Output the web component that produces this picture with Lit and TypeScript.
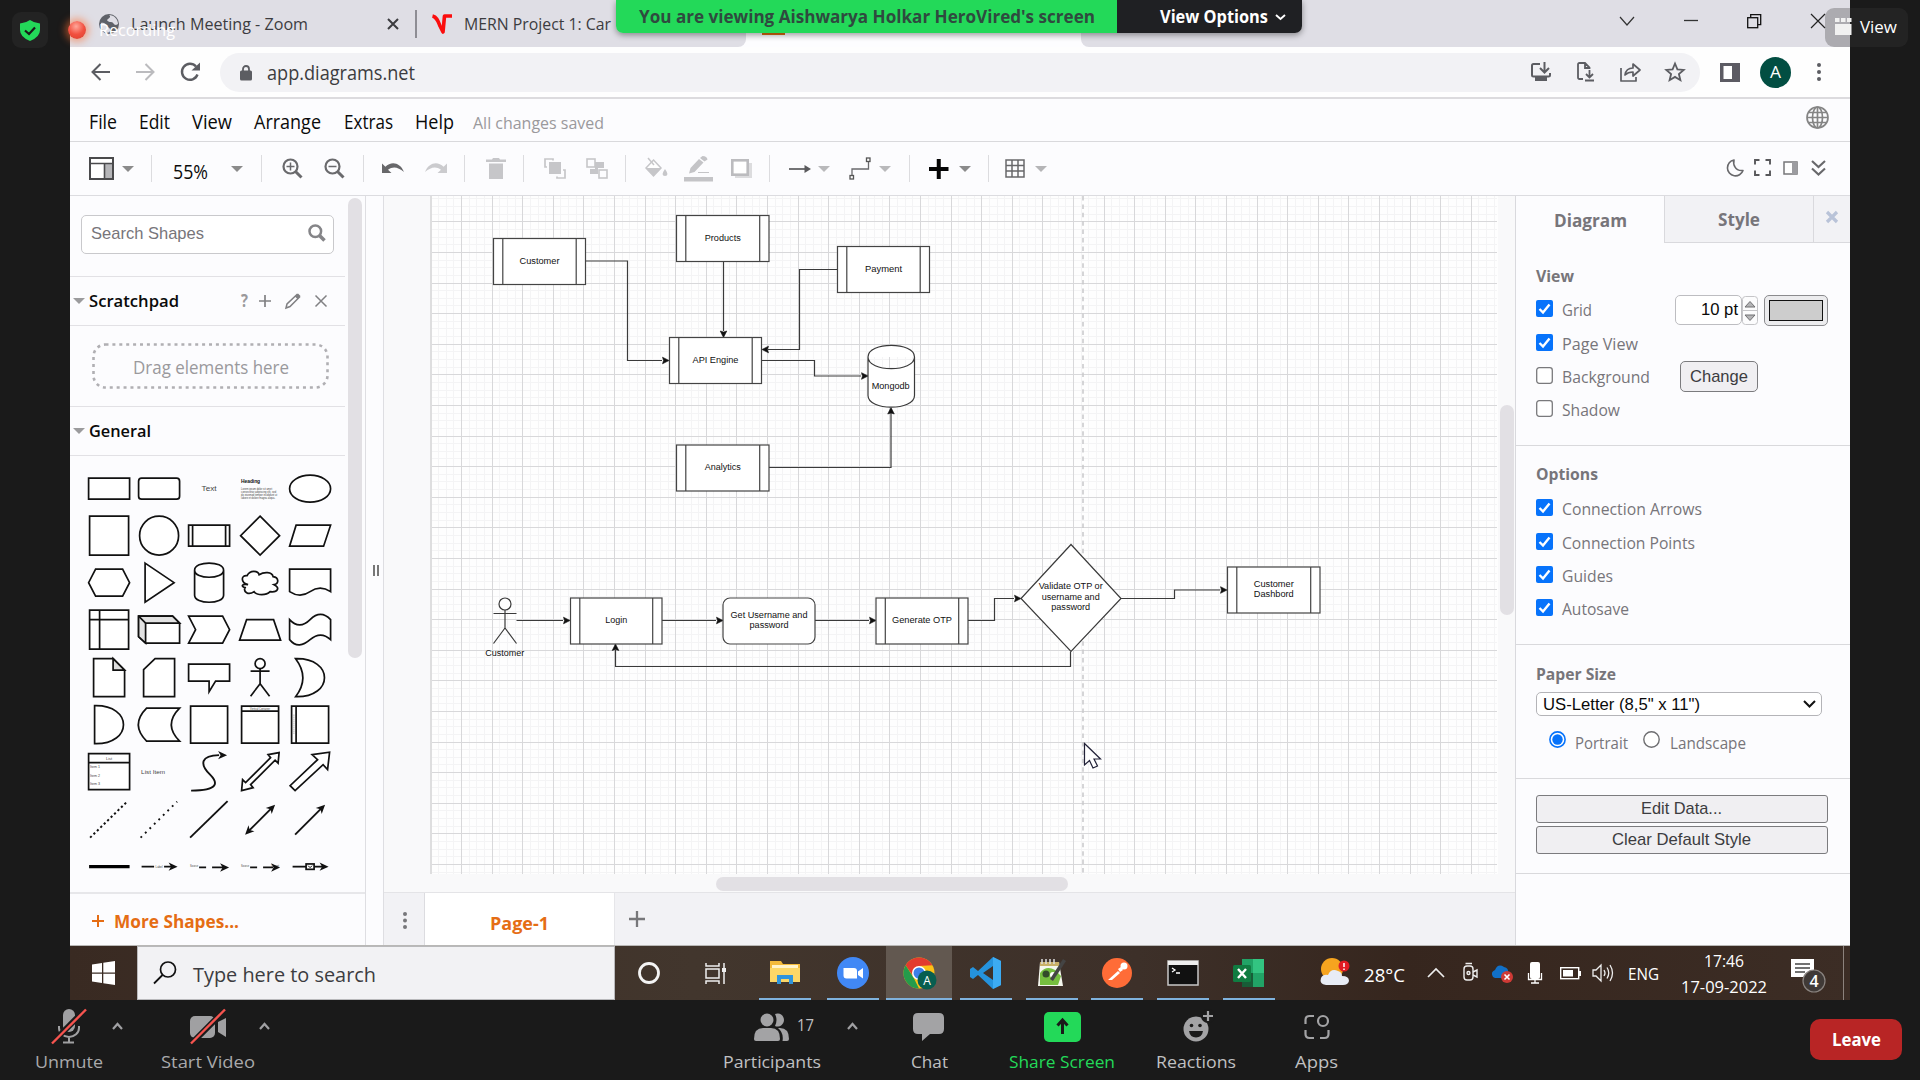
import { LitElement, html, svg, css } from "lit";
import { customElement } from "lit/decorators.js";

/* Text fitted to a fixed run length, so labels keep their column widths. */
const label = (text: string, width: number, cls = "", base = 18) => html`<svg class="label ${cls}" width=${width} height="24"><text x="0" y=${base} textLength=${width} lengthAdjust="spacingAndGlyphs">${text}</text></svg>`;

const icon = (w: number, h: number, body: unknown, cls = "") =>
  html`<svg class="icon ${cls}" width=${w} height=${h} viewBox="0 0 ${w} ${h}">${body}</svg>`;

const caret = (color = "#8b8b8b") => icon(12, 8, svg`<path d="M0 1H12L6 7Z" fill=${color}/>`);
const sep = () => html`<i class="sep"></i>`;

const shared = css`
  * { box-sizing: border-box; }
  .label { display: block; overflow: visible; flex: none; font-family: "Open Sans", "Noto Sans", sans-serif; font-size: 17px; fill: #3c3c40; }
  .icon { display: block; overflow: visible; flex: none; }
  .s16 { font-size: 16.5px; }
  .s18 { font-size: 18px; }
  .s19 { font-size: 19.4px; }
  .arial { font-family: "Liberation Sans", Arial, sans-serif; }
  .bold { font-weight: 700; }
  .mid { font-weight: 600; }
  .black { fill: #0a0a0a; }
  .gray { fill: #77757a; }
  .light { fill: #9a999c; }
  .white { fill: #fff; }
  .orange { fill: #e56d14; }
`;

@customElement("browser-chrome")
class BrowserChrome extends LitElement {
  static styles = [shared, css`
    :host { display: block; height: 99px; }
    .strip { height: 47px; background: #fdfdff; display: grid; grid-template-columns: 676px 335px 1fr; }
    .left { background: #dfdee5; border-radius: 0 0 8px 0; display: grid; align-items: center; padding-left: 29px; grid-template-columns: 32px 256px 28px 16px 33px 1fr; }
    .right { background: #dfdee5; border-radius: 0 0 0 8px; display: grid; align-items: center; grid-template-columns: 539px 64px 63px 64px 1fr; }
    .divider { width: 2px; height: 28px; background: #8e8d94; }
    .active { display: flex; flex-direction: column; padding-left: 16px; }
    .fav { width: 23px; height: 35px; background: #dd6b10; }
    .bar { height: 52px; background: #fefefe; border-bottom: 2px solid #dcdbde; display: grid; align-items: center;
      grid-template-columns: 21px 45px 44px 40px 1480px 20px 40px 43px 1fr; }
    .field { height: 39px; border-radius: 20px; background: #f2f2f5; display: grid; align-items: center; padding-left: 20px;
      grid-template-columns: 27px 1264px 46px 43px 45px 1fr; }
    .avatar { width: 31px; height: 31px; border-radius: 50%; background: #024e42; display: grid; place-items: center; }
  `];
  render() {
    return html`
      <div class="strip">
        <div class="left">
          ${icon(20, 20, svg`<circle cx="10" cy="10" r="10" fill="#5f6269"/><path d="M2 9c3-1 5 1 6 3s3 1 3 4-2 2-3 3C4 18 1 14 2 9zM10 1c2 1 1 3-1 4s0 3 3 3 2 3 5 3l2-1c0-5-4-9-9-9z" fill="#dfdee5"/>`)}
          ${label("Launch Meeting - Zoom", 177, "s16")}
          ${icon(12, 12, svg`<path d="M1 1L11 11M11 1L1 11" stroke="#3c3c40" stroke-width="2"/>`)}
          <i class="divider"></i>
          ${icon(22, 20, svg`<path d="M1.500 2C6 3 7 7 9 12L12 18L13.500 2H21" fill="none" stroke="#fb0d0d" stroke-width="3.600" stroke-linejoin="round"/>`)}
          ${label("MERN Project 1: Car", 147, "s16")}
        </div>
        <div class="active"><i class="fav"></i></div>
        <div class="right">
          <span></span>
          ${icon(14, 10, svg`<path d="M0 0L7 8L14 0" transform="translate(0 -2)" fill="none" stroke="#333" stroke-width="1.200"/>`)}
          ${icon(14, 14, svg`<path d="M0 3.500H14" stroke="#333" stroke-width="1.300"/>`)}
          ${icon(14, 14, svg`<g transform="translate(0 -3)" fill="none" stroke="#111" stroke-width="1.300"><rect x=".7" y="3.700" width="10" height="10"/><path d="M3.700 3.700V.7H13.700V10.700H10.700"/></g>`)}
          ${icon(14, 14, svg`<path d="M0 -3L14 11M14 -3L0 11" stroke="#222" stroke-width="1.200"/>`)}
        </div>
      </div>
      <div class="bar">
        <span></span>
        ${icon(20, 20, svg`<path d="M19 10H2M9.500 2L1.500 10L9.500 18" fill="none" stroke="#5c5d62" stroke-width="2"/>`)}
        ${icon(20, 20, svg`<path d="M0 10H17M9.500 2L17.500 10L9.500 18" fill="none" stroke="#bbbbbe" stroke-width="2"/>`)}
        ${icon(20, 20, svg`<path d="M17.500 12.500A8 8 0 1 1 16 4.500" fill="none" stroke="#5c5d62" stroke-width="2.400"/><path d="M20 .5V8.500H11.500Z" fill="#5c5d62"/>`)}
        <div class="field">
          ${icon(12, 16, svg`<rect y="6.500" width="12" height="10" rx="1.500" fill="#5c5d62"/><path d="M3 7V5a3 3 0 0 1 6 0V7" fill="none" stroke="#5c5d62" stroke-width="1.800"/>`)}
          ${label("app.diagrams.net", 148, "s19", 20)}
          ${icon(20, 20, svg`<g fill="none" stroke="#5c5d62" stroke-width="2"><path d="M9 2H2.500Q1 2 1 3.500V13Q1 14.500 2.500 14.500H17.500Q19 14.500 19 13V11M13.500 0V9.500M9 6L13.500 10.500L18 6"/></g><path d="M4 15H16V19H4Z" fill="#5c5d62"/>`)}
          ${icon(18, 20, svg`<path d="M6 17H2.500Q1 17 1 15.500V2.500Q1 1 2.500 1H8L12.500 5.500V7M8 1V6H12.500" fill="none" stroke="#5c5d62" stroke-width="1.800"/><path d="M12.500 8V15M9 12L12.500 15.500L16 12M8 18.500H17" fill="none" stroke="#5c5d62" stroke-width="1.800"/>`)}
          ${icon(21, 20, svg`<path d="M1 6V19H16V15M5 13Q6 6 13 6V2L20 8L13 14V10Q8 10 5 13Z" fill="none" stroke="#5c5d62" stroke-width="1.700" stroke-linejoin="round"/>`)}
          ${icon(20, 20, svg`<path d="M10 1.500L12.400 7.300L18.700 7.900L13.900 12L15.400 18.200L10 14.900L4.600 18.200L6.100 12L1.300 7.900L7.600 7.300Z" fill="none" stroke="#5c5d62" stroke-width="1.800"/>`)}
        </div>
        <span></span>
        ${icon(20, 19, svg`<rect x="0" y="0" width="20" height="19" fill="#5c5b63"/><rect x="3.500" y="3" width="8.500" height="13" fill="#fff"/>`)}
        <div class="avatar">${label("A", 11, "s16 white")}</div>
        ${icon(6, 20, svg`<g fill="#5c5d62" transform="translate(13 0)"><circle cx="3" cy="3" r="2"/><circle cx="3" cy="10" r="2"/><circle cx="3" cy="17" r="2"/></g>`)}
      </div>`;
  }
}

@customElement("editor-bars")
class EditorBars extends LitElement {
  static styles = [shared, css`
    :host { display: block; background: #fcfcfe; height: 97px; }
    .menu { height: 43px; border-bottom: 1px solid #d9d9dc; display: grid; align-items: center; padding: 1px 0 0 18.500px;
      grid-template-columns: 50px 53px 62px 90px 71px 58.500px 1333px 1fr; }
    .tools { height: 54px; border-bottom: 1px solid #dcdce0; display: grid; align-items: center; padding-left: 19px;
      grid-template-columns: 33px 29px 22px 58px 30px 21px 42px 39px 19px 43px 39px 22px 37px 21px 42px 39px 20px 39px 47px 38px 20px 29px 31px 30px 30px 20px 30px 29px 17px 30px 692px 27px 29px 28px 1fr; }
    .sep { width: 1px; height: 27px; background: #dcdcdf; }
    .up { padding-bottom: 2px; }
  `];
  render() {
    const lens = (sign: string) => icon(21, 21, svg`<circle cx="8.500" cy="8.500" r="7" fill="none" stroke="#6a6a6d" stroke-width="2.200"/><path d="M13.500 13.500L19.500 19.500" stroke="#6a6a6d" stroke-width="3"/><path d=${sign} stroke="#6a6a6d" stroke-width="1.500"/>`);
    return html`
      <div class="menu">
        ${label("File", 28, "s19 black", 20)}${label("Edit", 31, "s19 black", 20)}${label("View", 40, "s19 black", 20)}
        ${label("Arrange", 67, "s19 black", 20)}${label("Extras", 49, "s19 black", 20)}${label("Help", 39, "s19 black", 20)}
        ${label("All changes saved", 131, "s16 light", 20)}
        ${icon(23, 23, svg`<g fill="none" stroke="#858585" stroke-width="1.700" transform="translate(0 -3)"><circle cx="11.500" cy="11.500" r="10.500"/><ellipse cx="11.500" cy="11.500" rx="5" ry="10.500"/><path d="M11.500 1V22M1 11.500H22M2.500 6.500H20.500M2.500 16.500H20.500"/></g>`)}
      </div>
      <div class="tools">
        ${icon(25, 23, svg`<rect x="1" y="1" width="23" height="21" fill="#fff" stroke="#4a4a4c" stroke-width="2"/><path d="M15 6H23V21H15Z" fill="#b5b5b8"/><path d="M1 6.500H24M15.500 6V22" stroke="#4a4a4c" stroke-width="1.600"/>`)}
        ${caret()}${sep()}${label("55%", 35, "s19 black", 22)}${caret()}${sep()}
        ${lens("M4.500 8.500H12.500M8.500 4.500V12.500")}${lens("M4.500 8.500H12.500")}${sep()}
        ${icon(22, 12, svg`<path d="M0 .5V10H9.500L6 6.800C11 3 16 4 22 9C18 -1 9 -2 3.400 3.800Z" fill="#67676a"/>`)}
        ${icon(22, 12, svg`<path d="M22 .5V10H12.500L16 6.800C11 3 6 4 0 9C4 -1 13 -2 18.600 3.800Z" fill="#cbcbce"/>`)}
        ${sep()}
        ${icon(20, 21, svg`<path d="M0 1.500H6L7 0H13L14 1.500H20V4H0ZM3 5.500H17V21H3Z" fill="#c6c6c9"/>`)}
        ${sep()}
        ${icon(22, 21, svg`<path d="M5 4H17V16H5Z" fill="#c6c6c9"/><path d="M3 9H1V1H9V2.500M13 18.500V20H21V12H19" fill="none" stroke="#c6c6c9" stroke-width="1.700"/>`)}
        ${icon(22, 21, svg`<path d="M9 4H18V10H12V16H4V11H9Z" fill="#c6c6c9"/><rect x="1" y="1" width="8" height="8" fill="none" stroke="#c6c6c9" stroke-width="1.600"/><rect x="13" y="12" width="8" height="8" fill="none" stroke="#c6c6c9" stroke-width="1.600"/>`)}
        ${sep()}
        ${icon(23, 20, svg`<g transform="translate(0 -2)"><path d="M8.500 3L16 11L8.500 19L1 11Z" fill="#fff" stroke="#c6c6c9" stroke-width="1.500"/><path d="M1 11H16L8.500 19Z" fill="#c6c6c9"/><path d="M3 1L9 8" stroke="#c6c6c9" stroke-width="1.500"/><path d="M20 12Q25 19 20 19T20 12Z" fill="#c6c6c9"/></g>`)}
        ${icon(29, 26, svg`<g fill="#c4c4c7"><path d="M0 21H29V25.500H0Z"/><path d="M5 17.500L6.500 12L15 3L19.500 6.500L10.500 16ZM16 2L18.500 0Q23 0 23.500 3.500L20.500 5.500Z"/><path d="M14 16H25V17H14Z"/></g>`)}
        ${icon(21, 19, svg`<path d="M4 4H21V19H4Z" fill="#dcdcde"/><rect x="1.300" y="1.300" width="15.400" height="14.400" fill="#fff" stroke="#bcbcbf" stroke-width="2.600"/>`)}
        ${sep()}
        ${icon(22, 10, svg`<path d="M0 5H18" stroke="#5a5a5d" stroke-width="1.700"/><path d="M15.500 1L22 5L15.500 9Z" fill="#5a5a5d"/>`)}
        ${caret("#b9b9bb")}
        ${icon(22, 23, svg`<path d="M3 18V12H19.500V5" fill="none" stroke="#6a6a6d" stroke-width="1.300"/><rect x="1" y="18.500" width="3.500" height="3.500" fill="#fff" stroke="#555" stroke-width="1.300"/><rect x="17.500" y="1" width="3.500" height="3.500" fill="#fff" stroke="#555" stroke-width="1.300"/>`)}
        ${caret("#b9b9bb")}${sep()}
        ${icon(20, 20, svg`<path d="M0 10H19.500M9.750 0V20" stroke="#050505" stroke-width="4"/>`)}
        ${caret()}${sep()}
        ${icon(20, 19, svg`<path d="M1 1H19V18H1ZM1 6.500H19M1 12H19M7 1V18M13 1V18" fill="none" stroke="#68686b" stroke-width="1.500"/>`)}
        ${caret("#b5b5b7")}
        <div class="up">${icon(17, 17, svg`<path d="M7 1A8 8 0 1 0 16 11.500Q10 12 8 8Q6 5 7 1Z" fill="none" stroke="#68686b" stroke-width="1.600" stroke-linejoin="round"/>`)}</div>
        <div class="up">${icon(17, 17, svg`<path d="M1 5.500V1H5.500M11.500 1H16V5.500M16 11.500V16H11.500M5.500 16H1V11.500" fill="none" stroke="#58585b" stroke-width="1.900"/>`)}</div>
        <div class="up">${icon(15, 14, svg`<rect x="1" y="1" width="13" height="12" fill="#fff" stroke="#77777a" stroke-width="1.500"/><path d="M9 1H14V13H9Z" fill="#9c9ca0"/>`)}</div>
        <div class="up">${icon(15, 16, svg`<path d="M1 1L7.500 7L14 1M1 8.500L7.500 14.500L14 8.500" fill="none" stroke="#68686b" stroke-width="2.100"/>`)}</div>
      </div>`;
  }
}

/* Palette thumbnails, each drawn around the centre of its cell. */
const poly = (d: string) => svg`<path d=${d} fill="#fff" stroke="#111" stroke-width="1.700"/>`;
const tiny = (x: number, y: number, size: number, text: string, w = 0) =>
  svg`<text x=${x} y=${y} font-size=${size} fill="#444" font-family="Liberation Sans, sans-serif" textLength=${w} lengthAdjust="spacingAndGlyphs">${text}</text>`;
const head = (x: number, y: number, a: number) => svg`<path d="M0 0L-9 -4.200L-6.500 0L-9 4.200Z" transform="translate(${x} ${y}) rotate(${a})" fill="#111"/>`;
const shapes = [
  poly("M-20.500 -10.500H20.500V10.500H-20.500Z"),
  svg`<rect x="-20.500" y="-10.500" width="41" height="21" rx="3" fill="#fff" stroke="#111" stroke-width="1.700"/>`,
  tiny(-7.5, 2, 8, "Text", 15),
  svg`<text x="-19" y="-6" font-size="5" font-weight="700" fill="#111" font-family="Liberation Sans, sans-serif" textLength="19">Heading</text>${tiny(-19, 1, 3, "Lorem ipsum dolor sit amet", 31)}${tiny(-19, 4, 3, "consectetur adipiscing elit, sed", 35)}${tiny(-19, 7, 3, "do eiusmod tempor incididunt ut", 36)}${tiny(-19, 10, 3, "labore et dolore magna aliqua.", 34)}`,
  svg`<ellipse rx="20.500" ry="13.500" fill="#fff" stroke="#111" stroke-width="1.700"/>`,
  poly("M-19.500 -19.500H19.500V19.500H-19.500Z"),
  svg`<circle r="19.500" fill="#fff" stroke="#111" stroke-width="1.700"/>`,
  poly("M-20.500 -10.500H20.500V10.500H-20.500ZM-16.500 -10.500V10.500M16.500 -10.500V10.500"),
  poly("M0 -19.500L19.500 0L0 19.500L-19.500 0Z"),
  poly("M-14 -10.500H20.500L13.500 10.500H-20.500Z"),
  poly("M-13.500 -13.500H13.500L20.500 0L13.500 13.500H-13.500L-20.500 0Z"),
  poly("M-14 -19.500L15 0L-14 19.500Z"),
  poly("M-14.500 -12.500C-14.500 -22 14.500 -22 14.500 -12.500V12.500C14.500 22 -14.500 22 -14.500 12.500ZM-14.500 -12.500C-14.500 -3 14.500 -3 14.500 -12.500"),
  poly("M-13 -7C-10 -13 -2 -12 -1 -8C4 -11 12 -11 13 -6C19 -5 19 1 14 2C20 5 18 10 10 9C6 13 -3 13 -6 9C-12 13 -17 9 -15 5C-19 4 -19 1 -12 2C-20 0 -19 -8 -13 -7Z"),
  poly("M-20.500 -13.500H20.500V9Q10 2 0 9T-20.500 9Z"),
  poly("M-19.500 -19.500H19.500V19.500H-19.500ZM-9.500 -19.500V19.500M-19.500 -10H19.500"),
  svg`${poly("M-20.500 -13.500H13.500L20.500 -6.500V13.500H-13.500L-20.500 7Z")}<path d="M-20.500 -13.500H13.500L20.500 -6.500H-13.500V13.500L-20.500 7Z" fill="#e2e2e2" stroke="#111" stroke-width="1.700"/><path d="M-20.500 -13.500L-13.500 -6.500" stroke="#111" stroke-width="1.700"/>`,
  poly("M-20.500 -13.500H13.500L20.500 0L13.500 13.500H-20.500L-13.500 0Z"),
  poly("M-13.500 -10H13.500L20.500 10.500H-20.500Z"),
  poly("M-20.500 -10C-14 -3 -7 -3 0 -10S14 -17 20.500 -10V10C14 4 7 4 0 10S-14 18 -20.500 10Z"),
  svg`${poly("M-15.500 -19H4L15.500 -7.500V19H-15.500Z")}<path d="M4 -19V-7.500H15.500Z" fill="#ddd" stroke="#111" stroke-width="1.700"/>`,
  poly("M-4 -19H15.500V19H-15.500V-8Z"),
  poly("M-20.500 -13.500H20.500V3.500H6.500L0 14V3.500H-20.500Z"),
  svg`<g fill="#fff" stroke="#111" stroke-width="1.700"><circle cy="-14" r="5"/><path d="M0 -9V6M-9.500 -6.500H9.500M0 6L-9.500 18.500M0 6L9.500 18.500"/></g>`,
  poly("M-14.500 -19C24 -20 24 20 -14.500 19Q0 0 -14.500 -19Z"),
  poly("M-14.500 -19C24 -20 24 20 -14.500 19Z"),
  poly("M-12.500 -16.500H20.500Q4 0 20.500 16.500H-12.500Q-29 0 -12.500 -16.500Z"),
  poly("M-18.500 -18.500H18.500V18.500H-18.500Z"),
  svg`${poly("M-18.500 -18.500H18.500V18.500H-18.500ZM-18.500 -13.500H18.500")}${tiny(-10, -15, 3, "Vertical Container", 20)}`,
  svg`${poly("M-18.500 -18.500H18.500V18.500H-18.500ZM-14 -18.500V18.500")}<path d="M-16.200 -10V10" stroke="#999" stroke-dasharray="1 1"/>`,
  svg`${poly("M-20.500 -18H20.500V18H-20.500ZM-20.500 -9H20.500")}${tiny(-3, -12, 4, "List", 6)}${tiny(-19, -4, 4, "Item 1", 10)}${tiny(-19, 5.5, 4, "Item 2", 10)}${tiny(-19, 13.5, 4, "Item 3", 10)}`,
  tiny(-18, 2, 6.2, "List Item", 24),
  svg`<path d="M-18 19C10 19 9 11 1 3C-10 -8 -8 -16 10 -16.500" fill="none" stroke="#111" stroke-width="1.900"/>${head(18, -16.5, 0)}`,
  poly("M19 -19L18 -8.500L15 -11.500L-9.500 13L-7 16L-18.500 19L-17.500 8L-14.500 11L10.500 -14L8 -17Z"),
  poly("M19.500 -19.500L17.500 -2L13 -7L-15 19L-20 14L7.500 -12L2 -17Z"),
  svg`<path d="M-19 18L18 -18" stroke="#111" stroke-width="2" stroke-dasharray="2.200 2.600"/>`,
  svg`<path d="M-18.500 18L18 -18" stroke="#111" stroke-width="1.900" stroke-dasharray="1.900 4.400"/>`,
  svg`<path d="M-19 18L18.500 -18.500" stroke="#111" stroke-width="1.900"/>`,
  svg`<path d="M-12 12L12 -12" stroke="#111" stroke-width="1.900"/>${head(15, -15, -45)}${head(-15, 15, 135)}`,
  svg`<path d="M-15 15L12 -12" stroke="#111" stroke-width="1.900"/>${head(15, -15, -45)}`,
  svg`<path d="M-20 0H20.500" stroke="#000" stroke-width="3.200"/>`,
  svg`<path d="M-17.500 0H-5M5 0H13" stroke="#111" stroke-width="1.800"/>${tiny(-3.5, 1, 3, "Label", 7)}${head(18.5, 0, 0)}`,
  svg`<path d="M-10 .8H-3M3 .8H15" stroke="#111" stroke-width="1.800"/>${tiny(-19, 0.8, 3, "Source", 8)}${head(20, 0.8, 0)}`,
  svg`<path d="M-10 .8H-3M3 .8H13" stroke="#111" stroke-width="1.800"/>${tiny(-19, 0.8, 3, "Source", 8)}${tiny(11, 0.3, 3, "Target", 8)}${head(20, 0.8, 0)}`,
  svg`<path d="M-17.500 0H13" stroke="#111" stroke-width="1.800"/><rect x="-4" y="-2.700" width="8" height="5.400" fill="#fff" stroke="#111" stroke-width="1.700"/><path d="M-2 -1L0 1L2 -1" stroke="#111" fill="none"/>${head(18.5, 0, 0)}`,
];

@customElement("shape-sidebar")
class ShapeSidebar extends LitElement {
  static styles = [shared, css`
    :host { display: flex; width: 314px; height: 749px; background: #fcfcfe; border-right: 1px solid #dedee2; }
    .panel { width: 296px; border-right: 1px solid #dedee2; display: flex; flex-direction: column; }
    .body { display: flex; height: 696px; overflow: hidden; }
    .content { width: 275px; flex: none; }
    .track { padding: 2px 3px; }
    .thumb { width: 14px; height: 460px; border-radius: 7px; background: #e2e0e4; }
    .search { height: 81px; border-bottom: 1px solid #e2e1e5; padding: 19px 11px 0; }
    .box { width: 253px; height: 39px; border: 1px solid #c9c9cc; border-radius: 5px; background: #fff; display: flex; align-items: center; justify-content: space-between; padding: 0 7px 3px 9px; }
    .head { height: 49px; border-bottom: 1px solid #e2e1e5; display: grid; align-items: center; padding-left: 3px; grid-template-columns: 16px 152px 18px 26px 30px 1fr; }
    .drop { height: 81px; border-bottom: 1px solid #e2e1e5; padding: 17px 0 0 22px; }
    .grid { display: grid; grid-template-columns: repeat(5, 50.2px); grid-auto-rows: 47.3px; padding: 8.500px 0 0 14px; }
    .more { flex: 1; border-top: 2px solid #e7e7ea; display: flex; align-items: center; gap: 10px; padding: 3px 0 0 22px; }
    .split { display: flex; gap: 2.500px; align-items: center; padding-left: 7px; height: 749px; }
    .grip { width: 1.500px; height: 11px; background: #777; }
  `];
  render() {
    return html`
      <div class="panel">
        <div class="body">
          <div class="content">
            <div class="search"><div class="box">${label("Search Shapes", 113, "arial gray")}
              ${icon(18, 18, svg`<circle cx="7.300" cy="7.300" r="5.800" fill="none" stroke="#858588" stroke-width="2.500"/><path d="M11.500 11.500L16.500 16.500" stroke="#858588" stroke-width="3.600"/>`)}</div></div>
            <div class="head">${caret("#9b9b9d")}${label("Scratchpad", 90, "mid black")}
              ${label("?", 7, "bold light")}
              ${icon(12, 12, svg`<path d="M0 6H12M6 0V12" stroke="#808083" stroke-width="1.700"/>`)}
              ${icon(16, 16, svg`<path d="M1 15L2 11L12 1.500L14.500 4L5 13.500ZM10.500 3L13 5.500" fill="none" stroke="#808083" stroke-width="1.500"/><path d="M10.500 3L13 .5L15.500 3L13 5.500Z" fill="#808083"/>`)}
              ${icon(12, 12, svg`<path d="M.5 .5L11.500 11.500M11.500 .5L.5 11.500" stroke="#808083" stroke-width="1.500"/>`)}
            </div>
            <div class="drop">
              <svg class="icon" width="237" height="46"><rect x="1.500" y="1.500" width="234" height="43" rx="12" fill="none" stroke="#b0afb3" stroke-width="2.600" stroke-dasharray="3 3.900"/>
              <text class="label light s18" x="41" y="31" textLength="156" lengthAdjust="spacingAndGlyphs">Drag elements here</text></svg>
            </div>
            <div class="head">${caret("#9b9b9d")}${label("General", 62, "mid black")}</div>
            <div class="grid">${shapes.map((s) => html`<svg class="icon" width="50.2" height="47.3" viewBox="-25.100 -23.650 50.200 47.300">${s}</svg>`)}</div>
          </div>
          <div class="track"><div class="thumb"></div></div>
        </div>
        <div class="more">${icon(12, 12, svg`<path d="M0 6H12M6 0V12" stroke="#e56d14" stroke-width="2"/>`)}${label("More Shapes...", 125, "s18 bold orange", 19)}</div>
      </div>
      <div class="split"><i class="grip"></i><i class="grip"></i></div>`;
  }
}

/* Diagram model */
type Box = { x: number; y: number; w: number; lines: string[]; widths: number[]; kind?: string };
const H = 46;
const boxes: Box[] = [
  { x: 493.5, y: 238.5, w: 92, lines: ["Customer"], widths: [40] },
  { x: 676.5, y: 215.5, w: 92.5, lines: ["Products"], widths: [36] },
  { x: 837.5, y: 246.5, w: 92, lines: ["Payment"], widths: [37] },
  { x: 669.5, y: 337.5, w: 92, lines: ["API Engine"], widths: [46] },
  { x: 676.5, y: 445, w: 92.5, lines: ["Analytics"], widths: [36] },
  { x: 570.5, y: 598, w: 91.5, lines: ["Login"], widths: [22] },
  { x: 723, y: 598, w: 92, lines: ["Get Username and", "password"], widths: [77, 39], kind: "round" },
  { x: 876, y: 598, w: 92, lines: ["Generate OTP"], widths: [60] },
  { x: 1227.5, y: 567, w: 92.5, lines: ["Customer", "Dashbord"], widths: [40, 40] },
];
const edges = [
  { d: "M585.500 261H627.500V360.500H662", x: 669, y: 360.5, a: 0 },
  { d: "M723.500 261.500V331", x: 723.5, y: 337.5, a: 90 },
  { d: "M837.500 269.500H799.500V349.500H768", x: 762, y: 349.5, a: 180 },
  { d: "M761.500 360.500H814.500V376H861", x: 868, y: 376, a: 0 },
  { d: "M769 467.500H891V413", x: 891, y: 407.5, a: 270 },
  { d: "M516.500 620.500H563", x: 570, y: 620.5, a: 0 },
  { d: "M662 620.500H716", x: 723, y: 620.5, a: 0 },
  { d: "M815 620.500H869", x: 876, y: 620.5, a: 0 },
  { d: "M968 620.500H994.500V598.500H1014", x: 1021, y: 598.5, a: 0 },
  { d: "M1070.500 651.500V666.500H615.500V650", x: 615.5, y: 644, a: 270 },
  { d: "M1121 598.500H1174.500V590H1220", x: 1227, y: 590, a: 0 },
];
const caption = (cx: number, cy: number, lines: string[], widths: number[]) =>
  lines.map((t, i) => svg`<text class="cap" x=${cx - widths[i] / 2} y=${cy + 2.8 + (i - (lines.length - 1) / 2) * 10.5} textLength=${widths[i]} lengthAdjust="spacingAndGlyphs">${t}</text>`);
const series = (start: number, step: number, min: number, max: number) => {
  const out: number[] = [];
  for (let k = -8; k < 160; k++) {
    const v = start + k * step;
    if (v > min && v < max) out.push(Math.round(v) + 0.5);
  }
  return out;
};

@customElement("diagram-canvas")
class DiagramCanvas extends LitElement {
  static styles = [shared, css`
    :host { display: flex; flex-direction: column; width: 1131px; height: 749px; background: #f9f9fa; }
    .cap { font-family: "Liberation Sans", Arial, sans-serif; font-size: 9.200px; fill: #111; }
    .row { display: flex; height: 678px; }
    .canvas { display: block; flex: none; }
    .v { padding: 209px 0 0 1.500px; }
    .vthumb { width: 14px; height: 210px; border-radius: 7px; background: #e2e0e4; }
    .h { height: 18px; padding: 3px 0 0 332px; }
    .hthumb { width: 352px; height: 14px; border-radius: 7px; background: #e2e0e4; }
    .tabs { flex: 1; background: #f2f2f5; border-top: 1px solid #e4e4e7; display: grid; grid-template-columns: 40px 191px 1fr; align-items: stretch; }
    .cell { display: flex; align-items: center; justify-content: center; padding: 2px 0 0 1px; }
    .page { background: #fff; border-left: 1px solid #dcdce0; border-right: 1px solid #e6e6e9; display: flex; align-items: center; justify-content: center; padding-top: 6px; }
    .add { display: flex; align-items: center; padding: 0 0 1px 14px; }
  `];
  render() {
    const vx = series(461, 7.65, 432, 1497), hy = series(221.3, 7.65, 196, 874);
    const mx = series(461, 30.6, 432, 1497), my = series(221.3, 30.6, 196, 874);
    const grid = (xs: number[], ys: number[]) => xs.map((x) => `M${x} 196V874`).join("") + ys.map((y) => `M432 ${y}H1497`).join("");
    return html`
      <div class="row">
      <svg class="canvas" width="1114" height="678" viewBox="384 196 1114 678">
        <rect x="432" y="196" width="1066" height="678" fill="#fefefe"/>
        <path d=${grid(vx, hy)} stroke="#f4f4f5"/>
        <path d=${grid(mx, my)} stroke="#d8d8da"/>
        <path d="M431 196V874" stroke="#dededf" stroke-width="2"/>
        <path d="M1083 196V874" stroke="#c8c8ca" stroke-width="1.500" stroke-dasharray="4.500 3.900"/>
        <g fill="none" stroke="#3a3a3a" stroke-width="1.200">${edges.map((e) => svg`<path d=${e.d}/>`)}</g>
        ${edges.map((e) => svg`<path d="M0 0L-6.500 -3.300L-5.500 0L-6.500 3.300Z" transform="translate(${e.x} ${e.y}) rotate(${e.a})" fill="#111" stroke="#111" stroke-width=".6"/>`)}
        ${boxes.map((b) => svg`
          <rect x=${b.x} y=${b.y} width=${b.w} height=${H} rx=${b.kind ? 7 : 0} fill="#fff" stroke="#444" stroke-width="1.200"/>
          ${b.kind ? "" : svg`<path d="M${b.x + 9.3} ${b.y}v${H}M${b.x + b.w - 9.3} ${b.y}v${H}" stroke="#444" stroke-width="1.200"/>`}
          ${caption(b.x + b.w / 2, b.y + H / 2 - 0.6, b.lines, b.widths)}`)}
        <g fill="#fff" stroke="#3a3a3a" stroke-width="1.200">
          <path d="M868 357C868 341.500 914.500 341.500 914.500 357V395.500C914.500 411 868 411 868 395.500ZM868 357C868 372.500 914.500 372.500 914.500 357"/>
          <path d="M1071 544.500L1121 598.500L1071 651.500L1021 598.500Z"/>
          <circle cx="505" cy="604" r="6"/>
          <path d="M505 610V628M493.500 613.500H516.500M505 628L493.500 643.500M505 628L516.500 643.500"/>
        </g>
        ${caption(890.7, 386.5, ["Mongodb"], [38])}
        ${caption(1070.7, 597, ["Validate OTP or", "username and", "password"], [64, 58, 39])}
        ${caption(504.7, 653, ["Customer"], [39])}
        <path d="M1084.500 743.500V765L1089.500 760.500L1093 768L1097.500 766L1094 759H1100.500Z" fill="#fff" stroke="#222238" stroke-width="1.200"/>
      </svg>
      <div class="v"><div class="vthumb"></div></div>
      </div>
      <div class="h"><div class="hthumb"></div></div>
      <div class="tabs">
        <div class="cell">${icon(4, 18, svg`<g fill="#77777a"><circle cx="2" cy="3" r="2"/><circle cx="2" cy="9.500" r="2"/><circle cx="2" cy="16" r="2"/></g>`)}</div>
        <div class="page">${label("Page-1", 59, "bold orange", 19.5)}</div>
        <div class="add">${icon(16, 16, svg`<path d="M0 8H16M8 0V16" stroke="#77777a" stroke-width="2.300"/>`)}</div>
      </div>`;
  }
}

@customElement("format-panel")
class FormatPanel extends LitElement {
  static styles = [shared, css`
    :host { display: block; width: 335px; height: 749px; background: #fcfcfe; border-left: 1px solid #d9d9dd; }
    .tabs { display: grid; grid-template-columns: 148px 149px 37px; height: 47px; }
    .tab { display: flex; align-items: center; justify-content: center; padding-top: 2px; }
    .off { background: #f2f2f5; border-left: 1px solid #d9d9dd; border-bottom: 1px solid #d9d9dd; }
    .sect { border-bottom: 1px solid #d9d9dc; padding: 0 22px 0 19.500px; }
    .view { height: 203px; padding-top: 21px; }
    .opts { height: 199px; padding-top: 16px; }
    .paper { height: 134px; padding-top: 17px; }
    .acts { height: 95px; padding-top: 16px; display: grid; grid-template-rows: 28px 28px; row-gap: 3px; }
    .line { display: grid; grid-template-columns: 26px 1fr; align-items: center; height: 33.400px; }
    .line.num { grid-template-columns: 26px 113px 67px 22px 1fr; }
    .line.chg { grid-template-columns: 26px 118px 78px; }
    .rows { padding-top: 5.500px; }
    .opts .rows { padding-top: 6.500px; }
    .ck { padding-bottom: 3px; }
    .field { width: 67px; height: 30px; border: 1px solid #bdbdc1; border-radius: 5px; background: #fff; display: flex; justify-content: flex-end; align-items: center; padding: 0 3px 2px 0; }
    .swatch { width: 64px; height: 31px; border: 1px solid #8b8b8e; border-radius: 5px; background: #ececee; padding: 4px; }
    .chip { height: 21px; width: 54px; background: #cdcdcd; border: 1px solid #111; }
    .btn { border: 1px solid #7b7b7e; border-radius: 3px; background: #f0eff2; display: flex; align-items: center; justify-content: center; padding-bottom: 3px; }
    .change { width: 78px; height: 31px; border-radius: 5px; padding-bottom: 2px; }
    .select { width: 286px; height: 24px; border: 1px solid #b4b4b8; border-radius: 5px; background: #fff; display: flex; align-items: center; justify-content: space-between; padding: 0 5px 0 6px; }
    .radios { display: grid; grid-template-columns: 26px 68px 27px 1fr; padding: 15px 0 0 13px; align-items: center; }
    .radios .icon { margin-bottom: 7px; }
    .gapped { height: 30px; }
  `];
  private check(on: boolean) {
    return html`<div class="ck">${icon(17, 17, on
      ? svg`<rect width="17" height="17" rx="2" fill="#0773fb"/><path d="M3.500 9L7 12.500L13.500 4.500" fill="none" stroke="#fff" stroke-width="2.400"/>`
      : svg`<rect x=".7" y=".7" width="15.600" height="15.600" rx="2.500" fill="#fff" stroke="#79797c" stroke-width="1.300"/>`)}</div>`;
  }
  render() {
    const opts: [string, number][] = [["Connection Arrows", 140], ["Connection Points", 133], ["Guides", 51], ["Autosave", 67]];
    return html`
      <div class="tabs">
        <div class="tab">${label("Diagram", 73, "s18 bold gray")}</div>
        <div class="tab off">${label("Style", 42, "s18 bold gray")}</div>
        <div class="tab off">${icon(12, 18, svg`<path d="M1 1L11 11M11 1L1 11" stroke="#b9c3d8" stroke-width="3.200"/>`)}</div>
      </div>
      <div class="sect view">
        ${label("View", 38, "s16 bold gray")}
        <div class="rows">
          <div class="line num">${this.check(true)}${label("Grid", 30, "s16 gray", 17.5)}
            <div class="field">${label("10 pt", 37, "arial black")}</div>
            ${icon(16, 29, svg`<rect x=".5" y=".5" width="15" height="28" rx="3" fill="#fcfcfd" stroke="#c5c5c8"/><path d="M0 14.500H16" stroke="#c5c5c8"/><path d="M3 11L8 5.500L13 11ZM3 19L8 24.500L13 19Z" fill="#b5b5b7" stroke="#707073"/>`)}
            <div class="swatch"><div class="chip"></div></div></div>
          <div class="line">${this.check(true)}${label("Page View", 76, "s16 gray", 17.5)}</div>
          <div class="line chg">${this.check(false)}${label("Background", 88, "s16 gray", 17.5)}<div class="btn change">${label("Change", 58, "arial")}</div></div>
          <div class="line">${this.check(false)}${label("Shadow", 58, "s16 gray", 17.5)}</div>
        </div>
      </div>
      <div class="sect opts">
        ${label("Options", 62, "s16 bold gray")}
        <div class="rows">${opts.map(([t, w]) => html`<div class="line">${this.check(true)}${label(t, w, "s16 gray", 17.5)}</div>`)}</div>
      </div>
      <div class="sect paper">
        <div class="gapped">${label("Paper Size", 80, "s16 bold gray")}</div>
        <div class="select">${label('US-Letter (8,5" x 11")', 157, "arial s16 black")}${icon(13, 8, svg`<path d="M1 1L6.500 6.500L12 1" fill="none" stroke="#111" stroke-width="2"/>`)}</div>
        <div class="radios">
          ${icon(17, 17, svg`<circle cx="8.500" cy="8.500" r="7.600" fill="#fff" stroke="#0773fb" stroke-width="1.600"/><circle cx="8.500" cy="8.500" r="5.200" fill="#0773fb"/>`)}
          ${label("Portrait", 53, "s16 gray")}
          ${icon(17, 17, svg`<circle cx="8.500" cy="8.500" r="7.700" fill="#fff" stroke="#6e6e71" stroke-width="1.400"/>`)}
          ${label("Landscape", 76, "s16 gray")}
        </div>
      </div>
      <div class="sect acts">
        <div class="btn">${label("Edit Data...", 81, "arial")}</div>
        <div class="btn">${label("Clear Default Style", 139, "arial")}</div>
      </div>`;
  }
}

@customElement("task-bar")
class TaskBar extends LitElement {
  static styles = [shared, css`
    :host { display: grid; height: 55px; background: linear-gradient(90deg, #392a22, #42362d 35%, #3d3029 60%, #36261e 75%, #3c2d25); border-top: 1px solid #b9b8b6;
      grid-template-columns: 67px 478px 67px 67px 71px 66px 66px 68px 64px 66px 66px 66px 1fr; }
    .start { display: grid; place-items: center; }
    .search { background: #f2f2f4; border: 1px solid #b9b9bb; display: flex; align-items: center; gap: 16px; padding-left: 15px; }
    .app { display: grid; place-items: center; grid-template-rows: 1fr 2px; padding-top: 1px; }
    .line { width: 52px; height: 2px; background: #7fb2dd; }
    .on { background: #625850; }
    .on .line { width: 100%; }
    .tray { display: grid; align-items: center; padding-left: 37px; grid-template-columns: 45px 64px 34px 29px 37px 32px 32px 36px 41px 122px 52px 1fr; }
    .clock { display: grid; justify-items: center; row-gap: 2px; padding: 1px 12px 0 0; }
    .edge { width: 1px; height: 54px; background: #8c827c; }
  `];
  private app(body: unknown, cls = "", line = true) {
    return html`<div class="app ${cls}">${icon(32, 32, body)}${line ? html`<i class="line"></i>` : ""}</div>`;
  }
  render() {
    return html`
      <div class="start">${icon(24, 24, svg`<path d="M0 3.500L10 2V11.500H0ZM11.300 1.800L23 0V11.500H11.300ZM0 12.700H10V22L0 20.500ZM11.300 12.700H23V24L11.300 22.200Z" fill="#fff"/>`)}</div>
      <div class="search">${icon(24, 24, svg`<circle cx="15" cy="8.500" r="7.500" fill="none" stroke="#111" stroke-width="1.700"/><path d="M9.500 14L1 22.500" stroke="#111" stroke-width="1.800"/>`)}${label("Type here to search", 183, "s19", 21)}</div>
      ${this.app(svg`<circle cx="16" cy="16" r="9.500" fill="none" stroke="#f4f4f4" stroke-width="2.800"/>`, "", false)}
      ${this.app(svg`<g fill="none" stroke="#eee" stroke-width="1.500"><rect x="6" y="12" width="13" height="9"/><path d="M6 6V9H19V6M6 27V24H19V27M24 6V27"/></g><path d="M22 11H26V15H22Z" fill="#eee"/>`, "", false)}
      ${this.app(svg`<path d="M1 4H12L14 7H31V25H1Z" fill="#f3ba3a"/><path d="M3 8H29V18H3Z" fill="#fff3c9"/><path d="M1 11H31V25H1Z" fill="#fbd767"/><path d="M8 27V18H24V27H20V22H12V27Z" fill="#2f95dc"/>`)}
      ${this.app(svg`<circle cx="16" cy="16" r="16" fill="#4188f5"/><path d="M6.500 11H17Q20 11 20 14V21.500H9.500Q6.500 21.500 6.500 18.500ZM21 14.500L26 11V21.500L21 18Z" fill="#fff"/>`)}
      ${this.app(svg`<circle cx="16" cy="16" r="15.500" fill="#fbc116"/><path d="M2.600 8.200A15.500 15.500 0 0 1 29.400 8.200L16 9L10 19Z" fill="#e23b2e"/><path d="M2.600 8.200L10.500 20.500L16 31.500A15.500 15.500 0 0 1 2.600 8.200Z" fill="#259b4b"/><circle cx="16" cy="16" r="7" fill="#fff"/><circle cx="16" cy="16" r="5.500" fill="#3d7fe8"/><circle cx="24" cy="23" r="9.500" fill="#075e50"/><text x="20.200" y="27.500" font-size="12" font-family="Open Sans, sans-serif" fill="#fff">A</text>`, "on")}
      ${this.app(svg`<path d="M23 0L31 4V28L23 32L8 18L3 22L0 20V12L3 10L8 14ZM23 9L13 16L23 23Z" fill="#2593dd" fill-rule="evenodd"/><path d="M23 0L31 4V28L23 32Z" fill="#3cabf2"/>`)}
      ${this.app(svg`<path d="M4 5H23L27 29H2Z" fill="#f4f6ed"/><path d="M4 5H23V9H4Z" fill="#c9b069"/><path d="M4 16Q10 8 19 13L25 19L22 28H4Z" fill="#76bf3f"/><circle cx="10" cy="17" r="3.500" fill="#334b2a"/><circle cx="17" cy="18" r="3" fill="#fff"/><path d="M14 22L27 2L30 4L17 24Z" fill="#444"/><path d="M6 2V7M10 2V7M14 2V7M18 2V7" stroke="#ddd" stroke-width="1.500"/>`)}
      ${this.app(svg`<circle cx="16" cy="16" r="15" fill="#ff6c37"/><path d="M7 23L17 14L19 16L11 23ZM17 12L20 10L22 13L19 15Z" fill="#fff"/><circle cx="23" cy="9" r="3.500" fill="#fff"/>`)}
      ${this.app(svg`<rect x="1" y="4" width="30" height="24" fill="#111" stroke="#c8c8c8" stroke-width="1.500"/><path d="M1 4H31V8H1Z" fill="#eee"/><path d="M5 11L8 13L5 15M9 16H13" stroke="#fff" fill="none" stroke-width="1.300"/>`)}
      ${this.app(svg`<path d="M9 2H31V30H9Z" fill="#21a366"/><path d="M20 2H31V16H20Z" fill="#33c481"/><path d="M9 16H20V30H9Z" fill="#185c37"/><rect x="0" y="8" width="18" height="17" rx="1.500" fill="#107c41"/><path d="M5 12L13 21M13 12L5 21" stroke="#fff" stroke-width="2.400"/>`)}
      <div class="tray">
        ${icon(32, 32, svg`<circle cx="13" cy="12" r="11" fill="#f6a41f"/><path d="M7 28Q0 27 2 21Q4 17 9 18Q12 11 19 14Q23 15 23 19Q30 19 30 24Q29 28 24 28Z" fill="#e8ecf5"/><circle cx="25" cy="9" r="5.500" fill="#e01b24"/><path d="M25 6V10M25 11.500V13" stroke="#fff" stroke-width="1.500"/>`)}
        ${label("28°C", 41, "s18 white", 20.5)}
        ${icon(16, 10, svg`<path d="M0 9L8 1L16 9" fill="none" stroke="#eee" stroke-width="1.700"/>`)}
        ${icon(18, 22, svg`<g fill="none" stroke="#eee" stroke-width="1.400"><rect x="2" y="4" width="9" height="14" rx="3"/><path d="M11 10L15 8V15L11 13M3.500 1.500H10"/><circle cx="6.500" cy="11" r="1.500"/></g>`)}
        ${icon(24, 20, svg`<path d="M2 14Q-1 9 4 7Q7 0 13 4Q18 5 17 10Q20 14 15 15H4Z" fill="#1170c7"/><circle cx="16" cy="14" r="6" fill="#cf3a35"/><path d="M13.500 11.500L18.500 16.500M18.500 11.500L13.500 16.500" stroke="#fff" stroke-width="1.600"/>`)}
        ${icon(14, 22, svg`<rect x="2" y="0" width="10" height="17" rx="2" fill="#fff"/><path d="M.5 11V17.500H13.500V11M7 18V21M3 21H11" stroke="#fff" fill="none" stroke-width="1.300"/>`)}
        ${icon(21, 13, svg`<rect x=".7" y=".7" width="18" height="11" fill="none" stroke="#fff" stroke-width="1.400"/><path d="M3 3H13V9.500H3ZM19 4H21V9H19Z" fill="#fff"/>`)}
        ${icon(22, 18, svg`<path d="M1 6H4L9 1V17L4 12H1ZM12 6Q14 9 12 12M15 3.500Q18.500 9 15 14.500M18 1Q23 9 18 17" fill="none" stroke="#eee" stroke-width="1.300"/>`)}
        ${label("ENG", 31, "s16 white", 19)}
        <div class="clock">${label("17:46", 40, "s16 white")}${label("17-09-2022", 86, "s16 white")}</div>
        ${icon(34, 34, svg`<path d="M0 3H23V21H16L12 26V21H0Z" fill="#fff"/><path d="M4 8H19M4 12H19M4 16H14" stroke="#444" stroke-width="1.300"/><circle cx="23" cy="25" r="11" fill="#403a37" stroke="#8a8480" stroke-width="1.200"/><text x="18.500" y="30.500" font-size="16" font-weight="600" font-family="Open Sans, sans-serif" fill="#fff">4</text>`)}
        <i class="edge"></i>
      </div>`;
  }
}

@customElement("meeting-bar")
class MeetingBar extends LitElement {
  static styles = [shared, css`
    :host { display: flex; align-items: flex-start; height: 80px; background: #1a1a1a; padding: 6px 18px 0 29px; }
    .item { display: grid; grid-template-rows: 42px 28px; justify-items: center; align-items: center; flex: none; }
    .up { padding-top: 16px; display: flex; justify-content: center; flex: none; }
    .unmute { width: 80px; }
    .video { width: 100px; margin-left: 33px; }
    .people { width: 100px; margin-left: 452px; }
    .chat { width: 40px; margin-left: 47px; }
    .share { width: 108px; margin-left: 59px; }
    .react { width: 80px; margin-left: 40px; }
    .apps { width: 43px; margin-left: 59px; }
    .u1 { width: 16px; }
    .u2 { width: 12px; }
    .u3 { width: 20px; margin-left: 20px; }
    .dim { fill: #a9a9ab; }
    .soft { fill: #c0c0c2; }
    .green { fill: #23d959; }
    .who { display: flex; gap: 7px; align-items: center; padding-left: 24px; }
    .leave { width: 92px; height: 41px; margin: 13px 0 0 auto; border-radius: 10px; background: #b82525; display: grid; place-items: center; }
  `];
  render() {
    const up = icon(11, 8, svg`<path d="M1 7L5.500 2L10 7" fill="none" stroke="#a0a0a3" stroke-width="2.200"/>`);
    return html`
      <div class="item unmute">${icon(36, 36, svg`<g fill="none" stroke="#a0a0a2" stroke-width="2"><path d="M8 17V19A10 9 0 0 0 28 19V17M18 28V33M12 33.500H23"/></g><rect x="12" y="0" width="12" height="23" rx="6" fill="#a0a0a2"/><path d="M0 35L34 1" stroke="#1a1a1a" stroke-width="6"/><path d="M1 34.500L35 .5" stroke="#f6544f" stroke-width="2.400"/>`)}${label("Unmute", 68, "dim")}</div>
      <div class="up u1">${up}</div>
      <div class="item video">${icon(36, 36, svg`<rect x="0" y="7" width="25" height="22" rx="5" fill="#a0a0a2"/><path d="M28 13L36 9V28L28 23Z" fill="#a0a0a2"/><path d="M1 35L35 1" stroke="#1a1a1a" stroke-width="6"/><path d="M1 34.500L35 .5" stroke="#f6544f" stroke-width="2.400"/>`)}${label("Start Video", 94, "dim")}</div>
      <div class="up u2">${up}</div>
      <div class="item people"><div class="who">${icon(36, 30, svg`<g fill="#a3a3a5"><circle cx="13" cy="8" r="6.500"/><path d="M0 27Q0 16 9 16H17Q26 16 26 27Q26 29 24 29H2Q0 29 0 27Z"/><path d="M21 2A6.500 6.500 0 1 1 21 14Q24 8 21 2ZM26 16Q35 16 35 27Q35 29 33 29H28.500Q30 21 24 16Z"/></g>`)}${label("17", 17, "soft s16", 15.5)}</div>${label("Participants", 98, "soft")}</div>
      <div class="up u3">${up}</div>
      <div class="item chat">${icon(32, 30, svg`<path d="M5 1H26Q31 1 31 6V17Q31 22 26 22H17L9 29V22H5Q0 22 0 17V6Q0 1 5 1Z" fill="#a3a3a5"/>`)}${label("Chat", 37, "soft")}</div>
      <div class="item share">${icon(37, 30, svg`<rect width="37" height="30" rx="5" fill="#23d959"/><path d="M18.500 22V9M13.500 13.500L18.500 8L23.500 13.500" fill="none" stroke="#1a1a1a" stroke-width="3"/>`)}${label("Share Screen", 106, "green")}</div>
      <div class="item react">${icon(26, 32, svg`<circle cx="13" cy="18" r="12.500" fill="#a3a3a5"/><circle cx="8.500" cy="14.500" r="1.800" fill="#1a1a1a"/><circle cx="17" cy="14.500" r="1.800" fill="#1a1a1a"/><path d="M6 20H20Q19 26.500 13 26.500T6 20Z" fill="#1a1a1a"/><circle cx="25" cy="5" r="7" fill="#1a1a1a"/><path d="M25 0V10M20 5H30" stroke="#a3a3a5" stroke-width="2.200"/>`)}${label("Reactions", 80, "soft")}</div>
      <div class="item apps">${icon(26, 26, svg`<g fill="none" stroke="#a3a3a5" stroke-width="2.200"><path d="M1.500 10V6Q1.500 2 5.500 2H10M10 24H5.500Q1.500 24 1.500 20V16M16 24H20.500Q24.500 24 24.500 20V16"/><circle cx="19" cy="7" r="5"/></g>`)}${label("Apps", 43, "soft")}</div>
      <div class="leave">${label("Leave", 49, "bold white")}</div>`;
  }
}

@customElement("app-root")
class AppRoot extends LitElement {
  static styles = [shared, css`
    :host { display: block; position: relative; width: 1920px; height: 1080px; background: #1a1a1a; overflow: hidden; }
    .screen { width: 1780px; height: 1000px; margin: 0 auto; overflow: hidden; background: #fcfcfe; }
    .work { display: flex; }
    .shield { position: absolute; left: 12px; top: 12px; width: 36px; height: 36px; border-radius: 9px; background: #232323; display: grid; place-items: center; }
    .rec { position: absolute; left: 68px; top: 17.500px; display: flex; align-items: center; gap: 13px; }
    .dot { width: 18px; height: 18px; border-radius: 50%; background: radial-gradient(circle at 45% 30%, #ffa79a, #f2503f 50%, #d83f2c); box-shadow: 0 0 7px 3px rgba(255, 112, 50, .5); }
    .banner { position: absolute; left: 616px; top: 0; display: grid; grid-template-columns: 501px 185px; height: 33px; border-radius: 0 0 7px 7px; overflow: hidden; }
    .shade { position: absolute; left: 616px; top: 0; width: 686px; height: 33px; border-radius: 0 0 7px 7px; box-shadow: 0 2px 6px rgba(0, 0, 0, .4); }
    .say { background: #23d959; display: grid; place-items: center; }
    .say .label { fill: #2f4a3f; }
    .opt { background: #1f2023; display: flex; align-items: center; gap: 7px; padding-left: 43px; }
    .view { position: absolute; left: 1825px; top: 8px; width: 83px; height: 39px; border-radius: 9px; background: rgba(58, 58, 58, .31); display: flex; align-items: center; gap: 8px; padding: 0 0 2px 10px; }
  `];
  render() {
    return html`
      <div class="screen">
        <browser-chrome></browser-chrome>
        <editor-bars></editor-bars>
        <div class="work"><shape-sidebar></shape-sidebar><diagram-canvas></diagram-canvas><format-panel></format-panel></div>
        <task-bar></task-bar>
      </div>
      <meeting-bar></meeting-bar>
      <div class="shield">${icon(20, 21, svg`<path d="M10 0Q14 3 20 3.500V10Q20 17 10 21Q0 17 0 10V3.500Q6 3 10 0Z" fill="#23d959"/><path d="M5 10.500L9 14L15 7.500" fill="none" stroke="#1a1a1a" stroke-width="2.200"/>`)}</div>
      <div class="rec"><i class="dot"></i>${label("Recording", 76, "white s16")}</div>
      <div class="shade"></div>
      <div class="banner"><div class="say">${label("You are viewing Aishwarya Holkar HeroVired's screen", 456, "bold")}</div>
        <div class="opt">${label("View Options", 108, "bold white")}${icon(11, 8, svg`<path d="M1 2L5.500 6L10 2" fill="none" stroke="#fff" stroke-width="1.900"/>`)}</div></div>
      <div class="view">${icon(17, 17, svg`<path d="M0 0H4.500V4H0ZM6 0H10.500V4H6ZM12 0H16.500V4H12ZM0 6H16.500V17H0Z" fill="#f1f1f1"/>`)}${label("View", 37, "white")}</div>`;
  }
}
